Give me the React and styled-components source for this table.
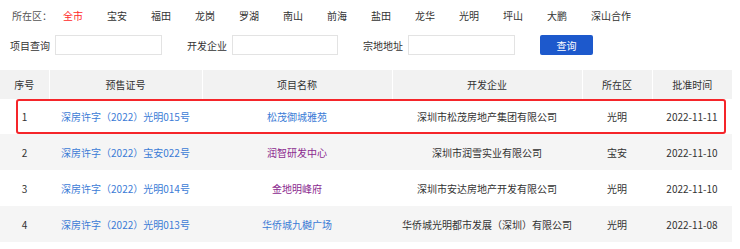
import React from 'react';
import styled, { createGlobalStyle } from 'styled-components';

const GlobalStyle = createGlobalStyle`
	body {
		margin: 0;
		background: #fff;
		font-family: "Noto Sans CJK SC", "Noto Sans", "Liberation Sans", sans-serif;
		font-size: 10px;
		color: #333;
	}
`;

const districts = ['全市', '宝安', '福田', '龙岗', '罗湖', '南山', '前海', '盐田', '龙华', '光明', '坪山', '大鹏', '深山合作'];

const rows = [
	{ no: 1, permit: '深房许字（2022）光明015号', name: '松茂御城雅苑', visited: false, company: '深圳市松茂房地产集团有限公司', area: '光明', date: '2022-11-11' },
	{ no: 2, permit: '深房许字（2022）宝安022号', name: '润智研发中心', visited: true, company: '深圳市润雪实业有限公司', area: '宝安', date: '2022-11-10' },
	{ no: 3, permit: '深房许字（2022）光明014号', name: '金地明峰府', visited: true, company: '深圳市安达房地产开发有限公司', area: '光明', date: '2022-11-10' },
	{ no: 4, permit: '深房许字（2022）光明013号', name: '华侨城九樾广场', visited: false, company: '华侨城光明都市发展（深圳）有限公司', area: '光明', date: '2022-11-08' },
];

function App() {
	return (
		<Page>
			<GlobalStyle />
			<DistrictRow>
				<DistrictLabel>所在区：</DistrictLabel>
				{districts.map((d, i) => (
					<District key={d} active={i === 0}>{d}</District>
				))}
			</DistrictRow>
			<SearchRow>
				<Field>
					<label>项目查询</label>
					<Input width={107} />
				</Field>
				<Field>
					<label>开发企业</label>
					<Input width={106} />
				</Field>
				<Field>
					<label>宗地地址</label>
					<Input width={107} />
				</Field>
				<SearchButton>查询</SearchButton>
			</SearchRow>
			<TableWrap>
				<Table>
					<colgroup>
						<col style={{ width: 49 }} />
						<col style={{ width: 153 }} />
						<col style={{ width: 190 }} />
						<col style={{ width: 190 }} />
						<col style={{ width: 70 }} />
						<col style={{ width: 80 }} />
					</colgroup>
					<thead>
						<tr>
							<th>序号</th>
							<th>预售证号</th>
							<th>项目名称</th>
							<th>开发企业</th>
							<th>所在区</th>
							<th>批准时间</th>
						</tr>
					</thead>
					<tbody>
						{rows.map((r) => (
							<Row key={r.no}>
								<td>{r.no}</td>
								<td><Link>{r.permit}</Link></td>
								<td><Link visited={r.visited}>{r.name}</Link></td>
								<td>{r.company}</td>
								<td>{r.area}</td>
								<td>{r.date}</td>
							</Row>
						))}
					</tbody>
				</Table>
				<Highlight />
			</TableWrap>
		</Page>
	);
}

export default App;

const Page = styled.div`
	width: 740px;
	height: 249px;
	overflow: hidden;
`;

const DistrictRow = styled.div`
	display: flex;
	align-items: center;
	height: 32px;
	padding-left: 12px;
	line-height: 1;
`;

const DistrictLabel = styled.span`
	width: 51px;
	color: #555;
`;

const District = styled.span`
	margin-right: 24px;
	color: ${(props) => (props.active ? '#ff2a2a' : '#333')};
	cursor: pointer;
`;

const SearchRow = styled.div`
	display: flex;
	align-items: center;
	height: 22px;
	padding-left: 10px;
	margin-top: 2px;
	gap: 25px;
`;

const Field = styled.div`
	display: flex;
	align-items: center;
	gap: 5px;
	label {
		color: #333;
	}
`;

const Input = styled.input`
	box-sizing: border-box;
	width: ${(props) => props.width}px;
	height: 20px;
	border: 1px solid #e3e3e3;
	outline: none;
	padding: 0 4px;
	background: #fff;
`;

const SearchButton = styled.button`
	width: 53px;
	height: 20px;
	border: none;
	border-radius: 2px;
	background-color: #1d59cc;
	color: #fff;
	font-family: inherit;
	font-size: 10px;
	padding: 0;
	cursor: pointer;
`;

const TableWrap = styled.div`
	position: relative;
	width: 732px;
	margin-top: 14px;
`;

const Table = styled.table`
	width: 732px;
	table-layout: fixed;
	border-collapse: collapse;
	th {
		height: 29px;
		padding: 0;
		background-color: #f2f2f2;
		font-weight: normal;
		color: #333;
		border-left: 1px solid #fff;
	}
	th:first-child {
		border-left: none;
	}
	td {
		height: 36px;
		padding: 0;
		text-align: center;
		white-space: nowrap;
		color: #333;
	}
`;

const Row = styled.tr`
	&:nth-child(even) {
		background-color: #f5f5f5;
	}
	&:first-child td {
		height: 35px;
	}
`;

const Link = styled.a`
	color: ${(props) => (props.visited ? '#8b2a8f' : '#3b7bd6')};
	text-decoration: none;
	cursor: pointer;
`;

const Highlight = styled.div`
	position: absolute;
	left: 16px;
	top: 29px;
	width: 710px;
	height: 35px;
	box-sizing: border-box;
	border: 2px solid #f5252a;
	border-radius: 3px;
	pointer-events: none;
`;
